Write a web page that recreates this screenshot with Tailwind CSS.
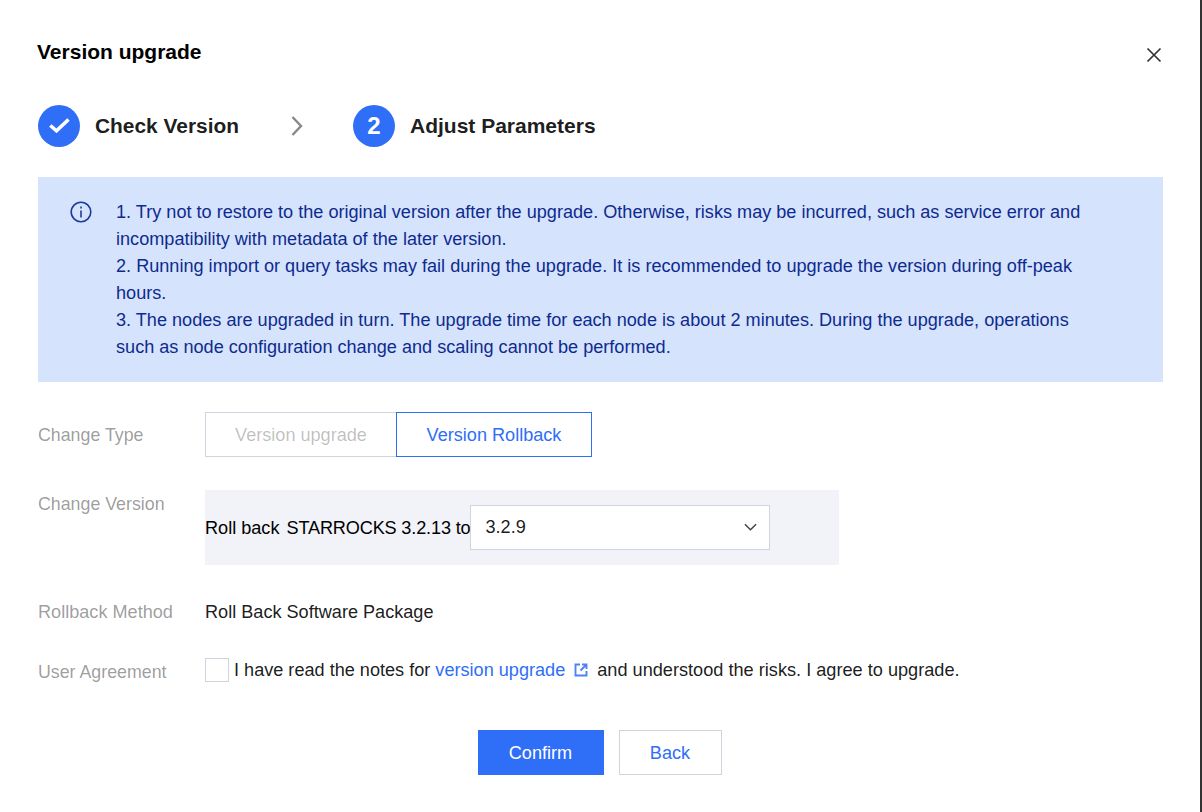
<!doctype html>
<html>
<head>
<meta charset="utf-8">
<script src="https://cdn.jsdelivr.net/npm/@tailwindcss/browser@4"></script>
</head>
<body class="m-0 bg-white">
<div class="relative w-[1200px] h-[812px] bg-white font-['Liberation_Sans',Arial,sans-serif] text-[#000000e6] text-[18.12px] pl-[38px] pr-[37px] overflow-hidden">
  <h1 class="pt-[40px] h-[92px] -ml-px text-[21px] leading-[24px] font-bold text-black">Version upgrade</h1>
  <button class="absolute left-[1146px] top-[47px] w-[16px] h-[16px] p-0">
    <svg viewBox="0 0 16 16" class="w-[16px] h-[16px]" fill="none" stroke="#333" stroke-width="1.7"><path d="M1.5 1.5 14.5 14.5M14.5 1.5 1.5 14.5"/></svg>
  </button>
  <div class="flex items-center h-[45px] mt-[11px]">
    <span class="w-[42px] h-[42px] shrink-0 rounded-full bg-[#2f6ef7] flex items-center justify-center">
      <svg viewBox="0 0 21 15" class="w-[21px] h-[15px]" fill="none" stroke="#fff" stroke-width="3.6"><path d="M1.3 7.5 7.5 12.8 19.5 1.5"/></svg>
    </span>
    <span class="ml-[15px] text-[20.9px] font-bold text-[#000000e6] w-[144px] whitespace-nowrap">Check Version</span>
    <svg viewBox="0 0 12 20" class="ml-[52px] w-[12px] h-[20px]" fill="none" stroke="#888" stroke-width="2.4"><path d="M1.5 1 10 10 1.5 19"/></svg>
    <span class="ml-[50px] w-[42px] h-[42px] shrink-0 rounded-full bg-[#2f6ef7] flex items-center justify-center text-white font-bold text-[24px]">2</span>
    <span class="ml-[15px] text-[21px] font-bold text-[#000000e6] whitespace-nowrap">Adjust Parameters</span>
  </div>
  <div class="flex mt-[29px] h-[205px] bg-[#d5e4fc] pl-[32px] pt-[22px] text-[#0f2a8f] leading-[27px]">
    <svg viewBox="0 0 22 22" class="w-[22px] h-[22px] mt-[2px] shrink-0" fill="none" stroke="#1c3a9e" stroke-width="1.6"><circle cx="11" cy="11" r="9.8"/><path d="M11 9.5V16.5"/><path d="M11 5.5V7.5"/></svg>
    <div class="ml-[24px] w-[985px]">
      1. Try not to restore to the original version after the upgrade. Otherwise, risks may be incurred, such as service error and incompatibility with metadata of the later version.<br>
      2. Running import or query tasks may fail during the upgrade. It is recommended to upgrade the version during off-peak hours.<br>
      3. The nodes are upgraded in turn. The upgrade time for each node is about 2 minutes. During the upgrade, operations such as node configuration change and scaling cannot be performed.
    </div>
  </div>
  <div class="flex mt-[30px] h-[45px]">
    <div class="w-[167px] leading-[47px] text-[#00000066] text-[17.8px]">Change Type</div>
    <div class="flex h-[45px] leading-[45px]">
      <div class="w-[191px] border border-[#cfd5de] border-r-0 text-center text-[#00000042]">Version upgrade</div>
      <div class="w-[196px] border border-[#2f6ef7] text-center text-[#2f6ef7]">Version Rollback</div>
    </div>
  </div>
  <div class="flex mt-[33px]">
    <div class="w-[167px] leading-[28px] text-[#00000066] text-[17.8px]">Change Version</div>
    <div class="w-[634px] h-[75px] bg-[#f2f3f8] flex items-center">
      <span class="text-black whitespace-nowrap pt-[2px]">Roll back</span><span class="ml-[7px] w-[184px] pt-[2px] text-black whitespace-nowrap tracking-[-0.15px]">STARROCKS 3.2.13 to</span>
      <div class="w-[300px] h-[45px] bg-white border border-[#cfd5de] flex items-center justify-between pl-[14px] pr-[12px] text-[#000000e6]">
        <span>3.2.9</span>
        <svg viewBox="0 0 14 8" class="w-[13px] h-[8px] -mt-[2px]" fill="none" stroke="#444" stroke-width="1.6"><path d="M1 1 7 7 13 1"/></svg>
      </div>
    </div>
  </div>
  <div class="flex mt-[34px] leading-[27px]">
    <div class="w-[167px] text-[#00000066]">Rollback Method</div>
    <div class="text-[#000000e6]">Roll Back Software Package</div>
  </div>
  <div class="flex mt-[30px] leading-[27px]">
    <div class="w-[167px] text-[#00000066] pt-[3px] text-[17.8px]">User Agreement</div>
    <div class="flex items-center h-[27px]">
      <span class="w-[24px] h-[24px] border border-[#cfd5de] bg-white"></span>
      <span class="ml-[5px] pt-[2px]">I have read the notes for <span class="text-[#2f6ef7]">version upgrade</span></span>
      <svg viewBox="0 0 14 14" class="ml-[9px] w-[14px] h-[14px]" fill="none" stroke="#4f83f5" stroke-width="1.9"><path d="M6 1.5H1.5V12.5H12.5V8"/><path d="M8 1.5H12.5V6M12.5 1.5 6.5 7.5"/></svg>
      <span class="ml-[9px] pt-[2px] text-[18.17px]">and understood the risks. I agree to upgrade.</span>
    </div>
  </div>
  <div class="flex justify-center gap-[15px] mt-[44px] mr-[2px]">
    <button class="w-[126px] h-[45px] pt-[2px] bg-[#2f6ef7] text-white">Confirm</button>
    <button class="w-[103px] h-[45px] pt-[2px] bg-white border border-[#cfd5de] text-[#2f6ef7]">Back</button>
  </div>
</div>
<div class="fixed right-0 top-0 w-[2px] h-full bg-[#333]"></div>
</body>
</html>
